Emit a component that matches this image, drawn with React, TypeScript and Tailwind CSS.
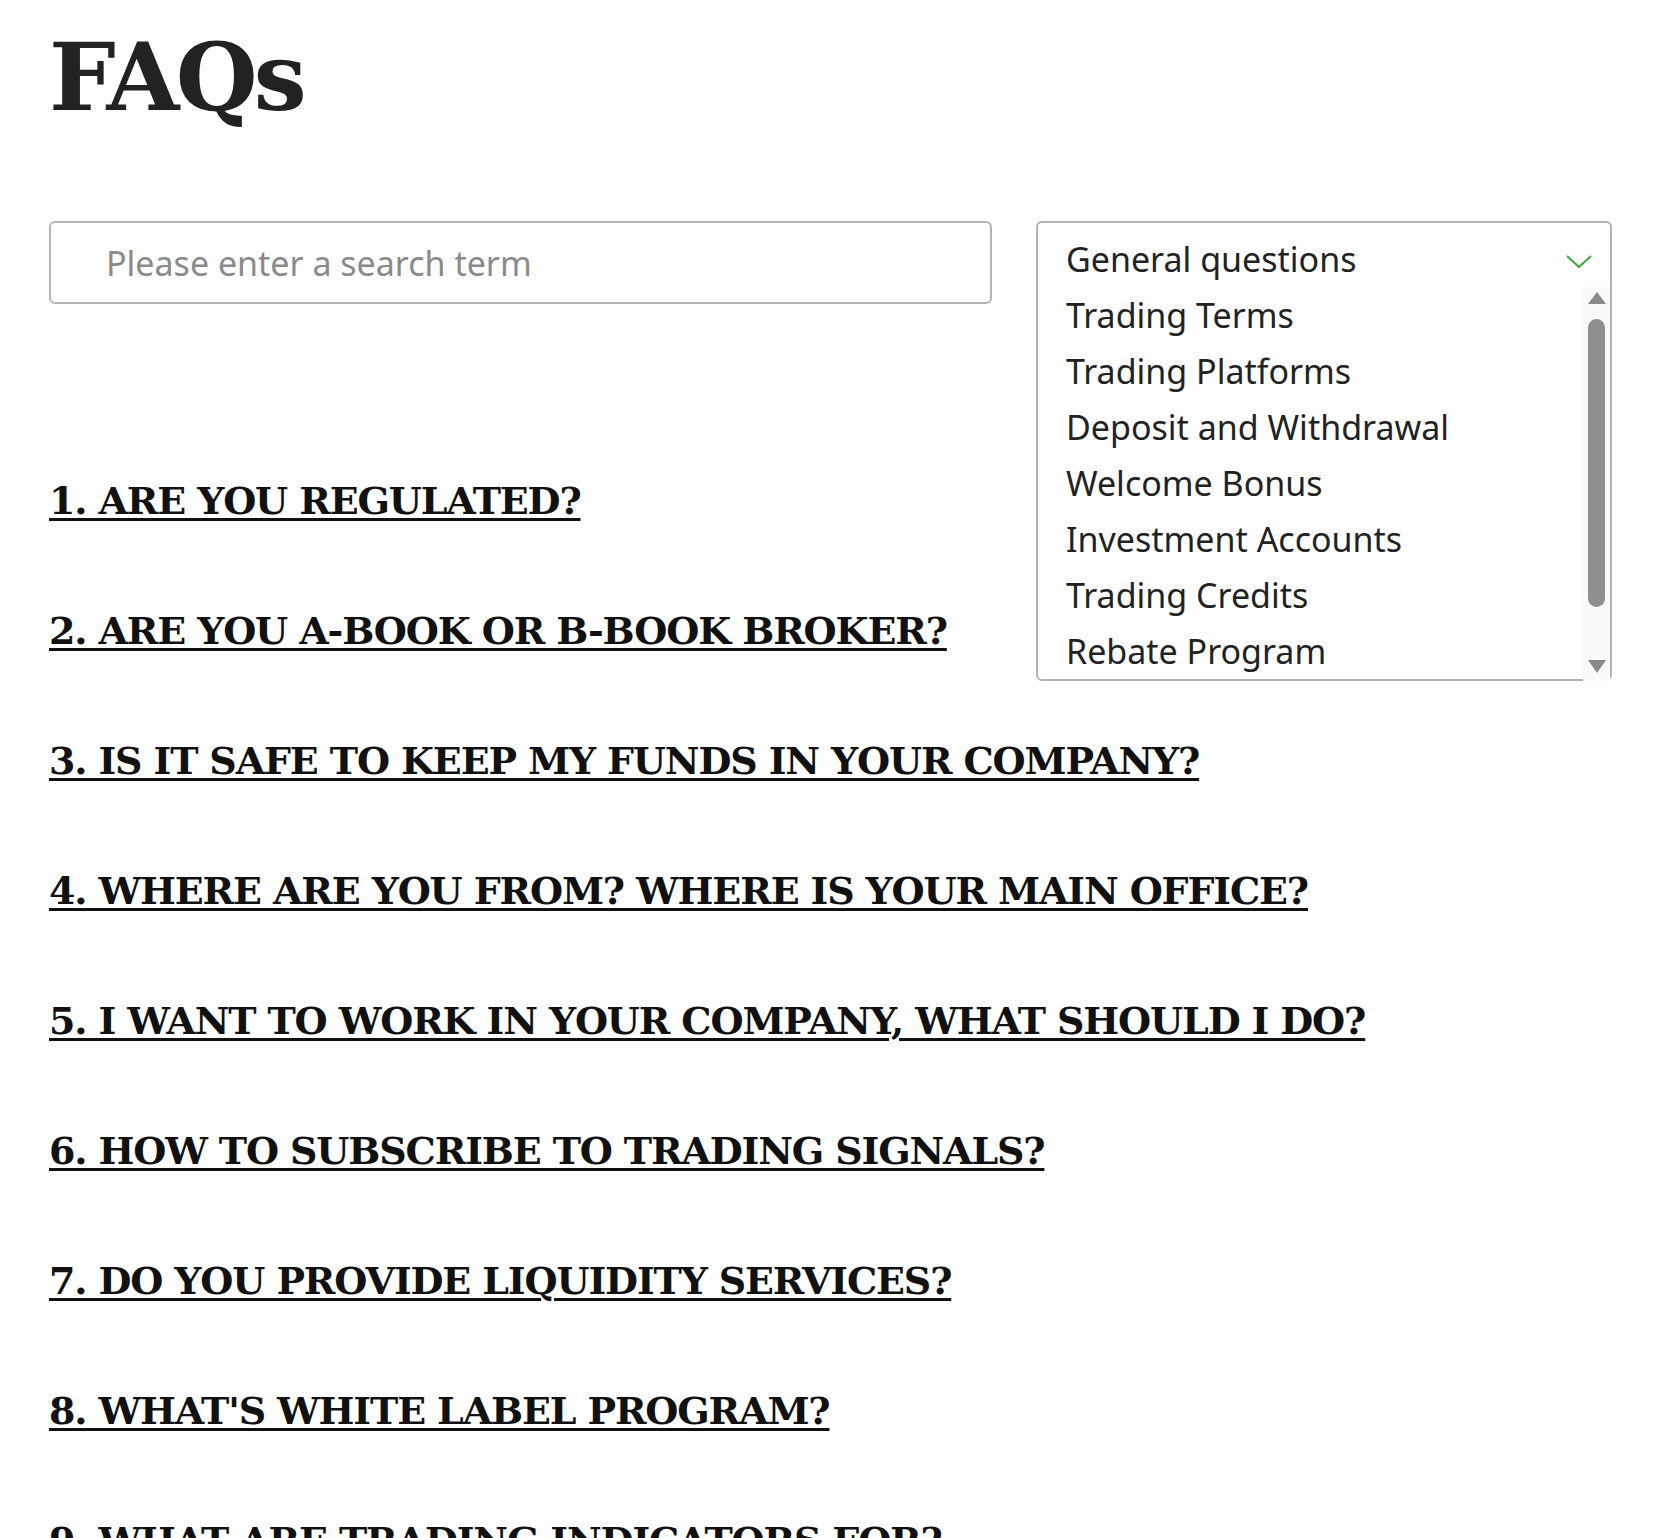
import { useState } from "react";

const questions = [
  "1. ARE YOU REGULATED?",
  "2. ARE YOU A-BOOK OR B-BOOK BROKER?",
  "3. IS IT SAFE TO KEEP MY FUNDS IN YOUR COMPANY?",
  "4. WHERE ARE YOU FROM? WHERE IS YOUR MAIN OFFICE?",
  "5. I WANT TO WORK IN YOUR COMPANY, WHAT SHOULD I DO?",
  "6. HOW TO SUBSCRIBE TO TRADING SIGNALS?",
  "7. DO YOU PROVIDE LIQUIDITY SERVICES?",
  "8. WHAT'S WHITE LABEL PROGRAM?",
  "9. WHAT ARE TRADING INDICATORS FOR?",
];

const categories = [
  "Trading Terms",
  "Trading Platforms",
  "Deposit and Withdrawal",
  "Welcome Bonus",
  "Investment Accounts",
  "Trading Credits",
  "Rebate Program",
];

const App = () => {
  const [query, setQuery] = useState("");

  return (
    <div className="min-h-screen bg-white pl-[49px] pr-[58px] font-['Noto_Sans',sans-serif]">
      <h1 className="pt-[30px] font-['DejaVu_Serif',serif] text-[94px] leading-[94px] font-bold tracking-[-0.04em] text-[#222]">
        FAQs
      </h1>

      {/* Search + category select */}
      <div className="mt-[97px] flex gap-[44px]">
        <input
          value={query}
          onChange={(e) => setQuery(e.target.value)}
          placeholder="Please enter a search term"
          className="h-[83px] flex-1 rounded-[6px] border-2 border-[#b3b3b3] pl-[55px] text-[34px] text-[#222] outline-none placeholder:text-[#8a8a8a]"
        />

        <div className="relative h-[83px] w-[576px]">
          <div className="absolute inset-x-0 top-0 z-10 rounded-[6px] border-2 border-[#b3b3b3] bg-white pt-[8px] text-[34px] text-[#222]">
            <div className="flex h-[56px] items-center justify-between pl-[28px] pr-[18px] leading-[56px]">
              <span>General questions</span>
              <svg width="26" height="13" viewBox="0 0 26 13" className="mt-[5px]">
                <polyline points="1,1 13,12 25,1" fill="none" stroke="#3aaa35" strokeWidth="2" />
              </svg>
            </div>
            <div className="flex">
              <ul className="flex-1 pl-[28px]">
                {categories.map((c) => (
                  <li key={c} className="h-[56px] leading-[56px]">
                    {c}
                  </li>
                ))}
              </ul>
              <div className="-mb-[2px] flex w-[27px] flex-col items-center bg-[#fafafa]">
                <svg width="18" height="12" viewBox="0 0 18 12" className="mt-[5px]">
                  <polygon points="9,0 18,12 0,12" fill="#8a8a8a" />
                </svg>
                <div className="mt-[15px] h-[288px] w-[17px] rounded-full bg-[#8f8f8f]" />
                <svg width="18" height="13" viewBox="0 0 18 13" className="mt-[53px]">
                  <polygon points="0,0 18,0 9,13" fill="#8a8a8a" />
                </svg>
              </div>
            </div>
          </div>
        </div>
      </div>

      {/* Questions */}
      <ul className="mt-[173px] flex flex-col gap-[82px] font-['DejaVu_Serif',serif] text-[38px] leading-[48px] font-bold tracking-[-0.03em] text-[#111]">
        {questions.map((q) => (
          <li key={q}>
            <a href="#" className="underline decoration-[3px] underline-offset-[4px]">
              {q}
            </a>
          </li>
        ))}
      </ul>
    </div>
  );
};

export default App;
